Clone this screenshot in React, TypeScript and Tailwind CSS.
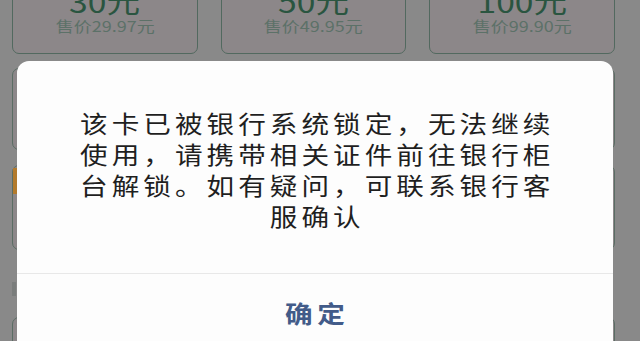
import React from "react";

const cards = [
  { face: "30元", price: "售价29.97元" },
  { face: "50元", price: "售价49.95元" },
  { face: "100元", price: "售价99.90元" },
];

export default function App() {
  return (
    <div
      className="relative w-[640px] h-[341px] overflow-hidden bg-[#898989]"
      style={{ fontFamily: '"Noto Sans CJK SC", "Noto Sans", sans-serif' }}
    >
      {/* page behind the overlay */}
      <div className="flex flex-col pl-[12px] pr-[25px] mt-[-30px]">
        <div className="grid grid-cols-3 gap-[23px]">
          {cards.map((c) => (
            <div
              key={c.face}
              className="h-[84px] rounded-[7px] border border-[#52695f] bg-[#8c8789] flex flex-col items-center justify-end pb-[17px]"
            >
              <span className="inline-block scale-x-[1.2] text-[28px] leading-[30px] text-[#2a5540]">{c.face}</span>
              <span className="inline-block scale-x-[1.2] text-[15px] leading-[20px] text-[#5c7168]">{c.price}</span>
            </div>
          ))}
        </div>
        <div className="grid grid-cols-3 gap-[23px] mt-[14px]">
          {cards.map((c) => (
            <div key={c.face} className="h-[82px] rounded-[7px] border border-[#5a6d64] bg-[#8c8789]" />
          ))}
        </div>
        <div className="relative mt-[15px] h-[85px] rounded-[7px] border border-[#5a6d64] bg-[#8c8789]">
          <div className="absolute left-0 top-[2px] w-[5px] h-[26px] bg-[#b27a2c]" />
        </div>
        <div className="mt-[32px] h-[14px] w-[4px] bg-[#7a7d7c]" />
        <div className="mt-[21px] h-[60px] rounded-[7px] border border-[#5a6d64] bg-[#8c8789]" />
      </div>

      {/* dialog */}
      <div className="absolute left-[17px] top-[61px] w-[596px] rounded-t-[12px] bg-[#fdfdfd] flex flex-col">
        <div className="pt-[46px] pb-[42px] flex justify-center">
          <p className="w-[425px] pl-[3px] scale-x-[1.15] text-center text-[24px] leading-[31px] tracking-[3.5px] text-[#1f1f1f]">
            该卡已被银行系统锁定，无法继续使用，请携带相关证件前往银行柜台解锁。如有疑问，可联系银行客服确认
          </p>
        </div>
        <div className="border-t border-[#e8e8e8] h-[79px] flex items-center justify-center">
          <span className="inline-block pl-[4px] scale-x-[1.15] text-[24px] leading-[28px] font-bold tracking-[4px] text-[#425b89]">确定</span>
        </div>
      </div>
    </div>
  );
}
